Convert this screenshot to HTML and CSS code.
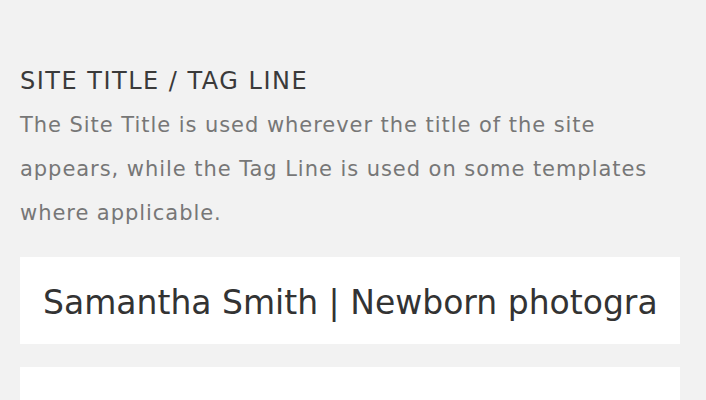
FILE: index.html
```html
<!DOCTYPE html>
<html>
  <head>
    <title>Site Title</title>
    <link rel="stylesheet" href="styles.css">
  </head>
  <body>
    <div class="field">
      <h2 class="field-title">SITE TITLE / TAG LINE</h2>
      <p class="field-desc">
        The Site Title is used wherever the title of the site<br>
        appears, while the Tag Line is used on some templates<br>
        where applicable.
      </p>
      <input class="field-input" type="text" value="Samantha Smith | Newborn photography" />
      <input class="field-input" type="text" value="" />
    </div>
  </body>
</html>
```

FILE: styles.css
```css
body {
  margin: 0;
  background: #f2f2f2;
  font-family: "DejaVu Sans", "Liberation Sans", sans-serif;
}
.field {
  padding: 63px 26px 0 20px;
}
.field-title {
  margin: 0;
  font-size: 24px;
  font-weight: normal;
  letter-spacing: 1.5px;
  line-height: 36px;
  color: #3a3a3a;
}
.field-desc {
  margin: 4px 0 22px;
  font-size: 21px;
  letter-spacing: 0.95px;
  line-height: 44px;
  color: #777;
}
.field-input {
  display: block;
  box-sizing: border-box;
  width: 100%;
  height: 87px;
  margin: 0 0 23px;
  padding: 4px 22px 0 23px;
  border: none;
  background: #fff;
  font-family: inherit;
  font-size: 33px;
  color: #333;
  outline: none;
}
```
